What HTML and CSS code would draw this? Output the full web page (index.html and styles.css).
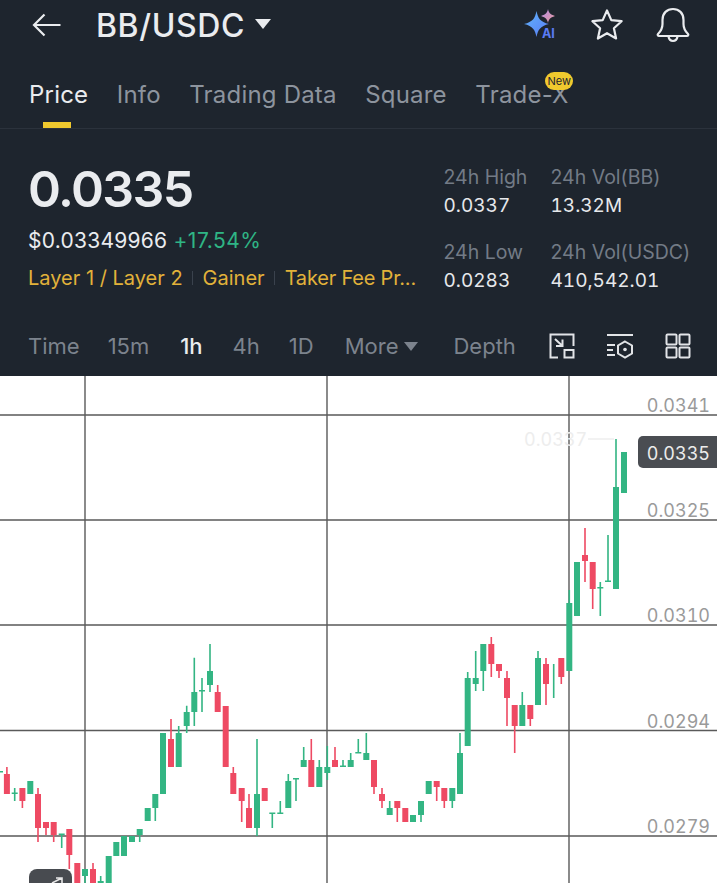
FILE: index.html
```html
<!DOCTYPE html>
<html lang="en">
<head>
  <meta charset="UTF-8">
  <title>BB/USDC</title>
  <link rel="stylesheet" href="styles.css">
</head>
<body>
  <div class="app">
    <header class="topbar">
      <svg class="back" viewBox="0 0 30 24" width="30" height="24">
        <path d="M28.5 12H2M12.5 1.5 2 12l10.5 10.5"/>
      </svg>
      <div class="pair">BB/USDC</div>
      <span class="pair-caret"></span>
      <div class="top-icons">
        <svg class="ai" viewBox="0 0 34 34" width="34" height="34">
          <defs>
            <linearGradient id="spark" x1="0" y1="0" x2="1" y2="1">
              <stop offset="0" stop-color="#5fb4fa"/>
              <stop offset="1" stop-color="#5b7cf5"/>
            </linearGradient>
            <linearGradient id="spark2" x1="0" y1="0" x2="1" y2="1">
              <stop offset="0" stop-color="#b48ee8"/>
              <stop offset="1" stop-color="#e79a9a"/>
            </linearGradient>
          </defs>
          <path fill="url(#spark)" d="M12.500 3C14 10 16 14 25 16 16 18 14 22 12.500 29 11 22 9 18 0 16 9 14 11 10 12.500 3z"/>
          <path fill="url(#spark2)" d="M24 1c.7 3.500 1.900 5.300 7 7-5.100 1.700-6.300 3.500-7 7-.7-3.500-1.900-5.300-7-7 5.100-1.700 6.300-3.500 7-7z"/>
          <text x="18" y="30" class="ai-label">AI</text>
        </svg>
        <svg class="line-icon star" viewBox="0 0 34 34" width="34" height="34">
          <path d="M17 2.500l4.300 9.600 10.300 1.100-7.700 7 2.200 10.300L17 25.200l-9.100 5.300 2.200-10.300-7.700-7 10.300-1.100z"/>
        </svg>
        <svg class="line-icon bell" viewBox="0 0 34 36" width="34" height="36">
          <path d="M2 27c3-3 4.500-5 4.500-10V13C6.500 6 11 2 17 2s10.500 4 10.500 11v4c0 5 1.500 7 4.500 10 .8 1-.1 2-1 2H3c-.9 0-1.800-1-1-2z"/>
          <path d="M12.500 29.500c.5 3 2.300 4.500 4.500 4.500s4-1.500 4.500-4.500"/>
        </svg>
      </div>
    </header>

    <nav class="tabs">
      <a class="tab active">Price</a>
      <a class="tab">Info</a>
      <a class="tab">Trading Data</a>
      <a class="tab">Square</a>
      <a class="tab tab-new">Trade-X<span class="new-badge">New</span></a>
    </nav>

    <section class="ticker">
      <div class="ticker-main">
        <div class="last-price">0.0335</div>
        <div class="fiat">$0.03349966 <span class="change">+17.54%</span></div>
        <div class="tags">
          <span>Layer 1 / Layer 2</span>
          <i></i>
          <span>Gainer</span>
          <i></i>
          <span>Taker Fee Pr...</span>
        </div>
      </div>
      <div class="stats">
        <div class="stat"><label>24h High</label><b>0.0337</b></div>
        <div class="stat"><label>24h Vol(BB)</label><b>13.32M</b></div>
        <div class="stat"><label>24h Low</label><b>0.0283</b></div>
        <div class="stat"><label>24h Vol(USDC)</label><b>410,542.01</b></div>
      </div>
    </section>

    <div class="intervals">
      <span class="iv iv-time">Time</span>
      <span class="iv iv-15m">15m</span>
      <span class="iv iv-1h active">1h</span>
      <span class="iv iv-4h">4h</span>
      <span class="iv iv-1d">1D</span>
      <span class="iv iv-more">More<em></em></span>
      <span class="iv iv-depth">Depth</span>
      <div class="tools">
        <svg viewBox="0 0 26 26" width="26" height="26">
          <path d="M9 24.500H1.500v-23h23V13"/>
          <rect x="15.500" y="17" width="9" height="7.500"/>
          <path d="M6 6l7 6.500M13.500 6.500v6.500H7"/>
        </svg>
        <svg viewBox="0 0 28 26" width="28" height="26">
          <path d="M1 2h26M1 12h8M1 17h6M1 22h8"/>
          <path d="M19 8.500l7 4v8l-7 4-7-4v-8z"/>
          <circle class="dot" cx="19" cy="16.500" r="1.800"/>
        </svg>
        <svg viewBox="0 0 26 26" width="26" height="26">
          <rect x="1.500" y="1.500" width="10" height="10" rx="1"/>
          <rect x="14.500" y="1.500" width="10" height="10" rx="1"/>
          <rect x="1.500" y="14.500" width="10" height="10" rx="1"/>
          <rect x="14.500" y="14.500" width="10" height="10" rx="1"/>
        </svg>
      </div>
    </div>

    <div class="chart">
      <svg viewBox="0 376 717 507" width="717" height="507">
        <path class="grid" d="M0 415H717M0 520H717M0 625H717M0 730.500H717M0 836H717M85 376V883M327 376V883M569 376V883"/>

        <path class="wick up" d="M14.700 788V801M61.700 834V848M85 869V883M100.700 876V883M155.300 807V821M178.700 726V733M186.700 705.700V733M194.300 657.700V726M202 678V712M210 644V692M139.700 835V842M257 739V836M272.300 813V828M280.300 801V813M288.300 774V781M296 779V801M303.700 747V760M319.300 760V767M327.300 746V780M343 760V766M350.700 753V760M358.300 739V752M366.300 733V753M389.700 801V808M421 815V822M452.300 801V808M460 733V753M467.700 672V678M475.700 651V691M483.300 671V691M522.300 692V705M538 651V658M553.700 664V698M569.300 590V603M600.300 582V616M608 535V581M616 439V487"/>
        <path class="body up" d="M30.300 781V794M85 869V876M100.700 881V883M108.700 856V883M116.300 842V856M124 836V856M132 836V842M139.700 829V835M147.700 808V821M155.300 794V808M163 733V794M178.700 733V767M186.700 712V726M194.300 692V712M210 671V685M257 794V828M288.300 781V808M303.700 760V767M319.300 767V787M327.300 767V773M350.700 760V767M366.300 753V760M389.700 808V815M413 815V822M421 801V815M428.700 781V794M452.300 788V801M460 753V794M467.700 678V746M475.700 678V684M483.300 644V671M522.300 705V726M538 658V705M569.300 603V671M577 562V616M616 487V589M624 452V493"/>
        <path class="tick up" d="M14.700 792.500V794M61.700 833.500V835M272.300 812.500V814M280.300 812.500V814M296 778V779.500M202 690V691.500M343 765.500V767M358.300 752V753.500M600.300 587V588.500M608 580.500V582M0 771V772.500"/>

        <path class="wick down" d="M6.900 767V774M22.400 801V808M38 788V842M46 828V835M53.700 835V842M69.300 855V869M93 863V869M171 719V739M217.700 685V692M233.300 767V773M241.700 801V822M249 794V808M311.300 739V760M335 747V760M374 787V794M382 788V808M397.300 808V822M436.700 787V801M444.300 801V808M491.300 637V677M499 671V678M507 671V726M514.700 726V753M530.300 719V726M546 658V705M561.300 677V684M585 528V582M592.700 589V609"/>
        <path class="body down" d="M6.900 774V794M22.400 788V801M38 794V828M46 822V828M53.700 822V835M69.300 829V855M77.300 863V883M93 869V883M171 739V767M217.700 692V712M225.700 706V767M233.300 773V794M241.700 788V801M249 808V828M264.700 788V801M311.300 760V787M335 760V767M374 760V787M382 794V801M397.300 801V808M405.300 808V822M436.700 781V787M444.300 788V801M491.300 644V664M499 664V671M507 678V698M514.700 705V726M530.300 705V719M546 664V684M561.300 658V677M585 555V561M592.700 562V589"/>

        <text class="high-label" x="524" y="446">0.0337</text>
        <path class="high-line" d="M588 439H614"/>

        <text class="axis" x="710" y="412">0.0341</text>
        <text class="axis" x="710" y="517">0.0325</text>
        <text class="axis" x="710" y="622">0.0310</text>
        <text class="axis" x="710" y="728">0.0294</text>
        <text class="axis" x="710" y="833">0.0279</text>

        <rect class="last-tag" x="638" y="436" width="90" height="32" rx="5"/>
        <text class="last-text" x="710" y="460">0.0335</text>

        <rect class="jump" x="29" y="869" width="43" height="30" rx="8"/>
        <path class="jump-arrow" d="M52 883l10-5M56 878h6v5"/>
      </svg>
    </div>
  </div>
</body>
</html>
```

FILE: styles.css
```css
* {
  box-sizing: border-box;
}
body {
  margin: 0;
  background: #1e252e;
  font-family: Inter, 'Noto Sans', sans-serif;
  color: #eaecef;
  overflow: hidden;
}
.app {
  width: 717px;
  height: 883px;
  display: flex;
  flex-direction: column;
  overflow: hidden;
}

/* top bar */
.topbar {
  display: flex;
  align-items: center;
  height: 50px;
  padding-left: 32px;
}
.back {
  fill: none;
  stroke: #eaecef;
  stroke-width: 2.2;
}
.pair {
  margin-left: 34px;
  font-size: 32px;
  font-weight: 500;
  letter-spacing: 0.6px;
}
.pair-caret {
  margin-left: 10px;
  margin-top: -3px;
  border-left: 8px solid transparent;
  border-right: 8px solid transparent;
  border-top: 10px solid #eaecef;
}
.top-icons {
  margin-left: auto;
  padding-right: 27px;
  display: flex;
  align-items: center;
  gap: 32px;
}
.ai-label {
  font-size: 12.5px;
  font-weight: 700;
  fill: #5b7cf5;
}
.line-icon {
  fill: none;
  stroke: #eaecef;
  stroke-width: 2.2;
  stroke-linejoin: round;
}

/* tabs */
.tabs {
  display: flex;
  height: 79px;
  padding: 29px 0 0 29px;
  gap: 28.5px;
  border-bottom: 1px solid #2b323c;
}
.tab {
  position: relative;
  font-size: 24px;
  line-height: 32px;
  color: #8d949e;
  letter-spacing: 0.2px;
}
.tab.active {
  color: #eaecef;
}
.tab.active::after {
  content: "";
  position: absolute;
  left: 14px;
  top: 43px;
  width: 28px;
  height: 6px;
  background: #f0c92e;
}
.new-badge {
  position: absolute;
  left: 70px;
  top: -7px;
  width: 28px;
  height: 18px;
  border-radius: 9px;
  background: #f0c92e;
  color: #1e252e;
  font-size: 11px;
  line-height: 18px;
  text-align: center;
  letter-spacing: 0;
}

/* price block */
.ticker {
  display: flex;
  height: 175px;
  padding: 30px 0 0 28px;
}
.ticker-main {
  width: 415.5px;
}
.last-price {
  font-size: 50px;
  line-height: 60px;
  font-weight: 600;
  letter-spacing: -1.6px;
}
.fiat {
  margin-top: 8px;
  font-size: 21px;
  line-height: 28px;
  letter-spacing: 0.25px;
}
.change {
  letter-spacing: 0.5px;
  color: #2fb585;
}
.tags {
  margin-top: 9px;
  display: flex;
  align-items: center;
  gap: 9.5px;
  font-size: 20px;
  line-height: 28px;
  color: #e2b23a;
}
.tags span:last-child {
  letter-spacing: -0.2px;
}
.tags i {
  width: 1px;
  height: 14px;
  background: #3a424d;
}
.stats {
  display: grid;
  grid-template-columns: 107px auto;
  grid-auto-rows: 75px;
  align-content: start;
  margin-top: 5px;
}
.stat label {
  display: block;
  font-size: 19.5px;
  line-height: 26px;
  color: #737b86;
}
.stat b {
  display: block;
  margin-top: 3px;
  font-size: 19px;
  line-height: 26px;
  font-weight: 400;
  font-variant-numeric: tabular-nums;
  color: #e6e8eb;
}

/* interval row */
.intervals {
  display: flex;
  align-items: center;
  height: 72px;
  padding: 12px 0 0 28px;
  font-size: 22px;
  color: #7c838d;
}
.iv-15m { margin-left: 28px; }
.iv-1h { margin-left: 31px; }
.iv-4h { margin-left: 30px; }
.iv-1d { margin-left: 29px; }
.iv-more { margin-left: 31px; display: flex; align-items: center; }
.iv-depth { margin-left: 35px; }
.iv.active {
  color: #eaecef;
  font-weight: 500;
}
.iv-more em {
  margin-left: 6px;
  border-left: 7.5px solid transparent;
  border-right: 7.5px solid transparent;
  border-top: 9px solid #7c838d;
}
.tools {
  margin-left: auto;
  margin-right: 26px;
  display: flex;
  gap: 31px;
}
.tools svg {
  fill: none;
  stroke: #e2e4e7;
  stroke-width: 2;
}
.tools .dot {
  fill: #e2e4e7;
  stroke: none;
}

/* chart */
.chart {
  flex: 1;
  background: #fff;
}
.chart svg {
  display: block;
}
.grid {
  fill: none;
  stroke: #5a5a5a;
  stroke-width: 1.4;
}
.wick, .body, .tick {
  fill: none;
}
.wick { stroke-width: 1.6; }
.body { stroke-width: 6; }
.tick { stroke-width: 6; }
.up { stroke: #33b583; }
.down { stroke: #ee4a63; }
.axis {
  font-size: 18px;
  font-variant-numeric: tabular-nums;
  fill: #9a9a9a;
  text-anchor: end;
}
.last-tag {
  fill: #4a4d52;
}
.last-text {
  font-size: 18px;
  font-variant-numeric: tabular-nums;
  fill: #ececec;
  text-anchor: end;
}
.high-label {
  font-size: 18px;
  font-variant-numeric: tabular-nums;
  fill: #ededed;
}
.high-line {
  stroke: #ededed;
  stroke-width: 1.4;
}
.jump {
  fill: #484b50;
}
.jump-arrow {
  fill: none;
  stroke: #e8e8e8;
  stroke-width: 1.6;
}
```
